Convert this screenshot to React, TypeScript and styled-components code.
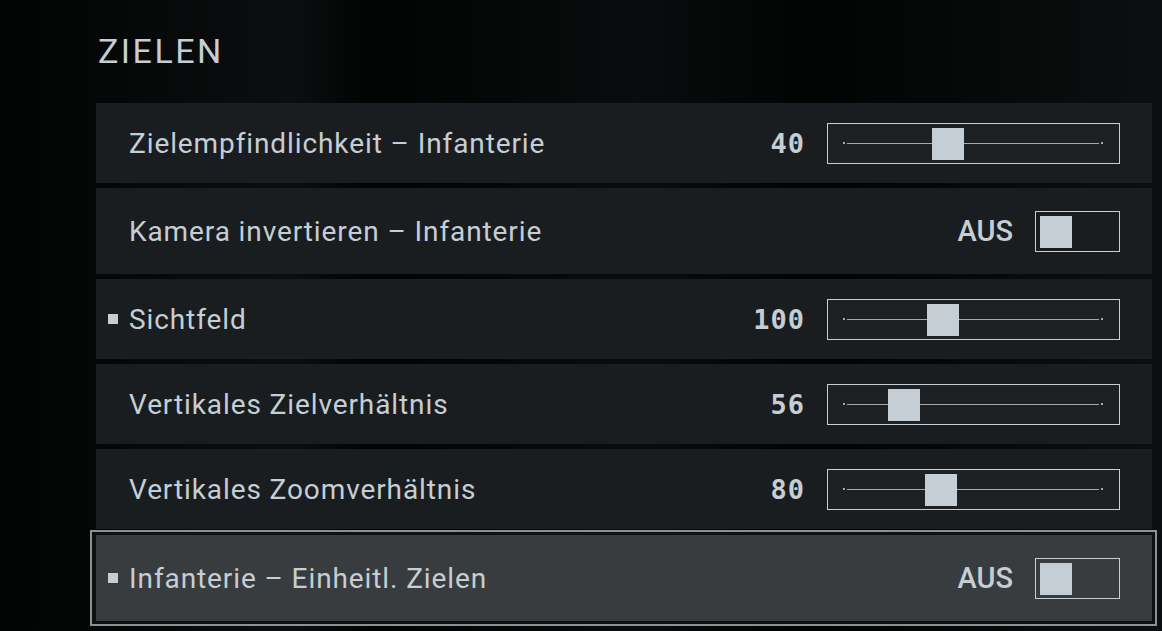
import React from "react";
import styled, { createGlobalStyle } from "styled-components";

const GlobalStyle = createGlobalStyle`
  html, body {
    margin: 0;
    padding: 0;
    background: #000;
  }
  body {
    font-family: "Roboto", "Liberation Sans", sans-serif;
    overflow: hidden;
  }
`;

const Screen = styled.div`
  width: 1162px;
  height: 631px;
  overflow: hidden;
  box-sizing: border-box;
  padding: 0 10px 0 96px;
  background:
    linear-gradient(90deg, rgba(20, 24, 26, 0) 0%, rgba(20, 24, 26, 0.5) 25%, rgba(0, 0, 0, 0) 32%, rgba(18, 22, 24, 0.45) 55%, rgba(0, 0, 0, 0) 70%, rgba(22, 26, 28, 0.5) 100%),
    #020303;
`;

const Title = styled.h1`
  margin: 0;
  padding: 34px 0 0 2px;
  height: 103px;
  box-sizing: border-box;
  font-family: "Roboto", "Liberation Sans", sans-serif;
  font-weight: 400;
  font-size: 34px;
  line-height: 34px;
  letter-spacing: 2.5px;
  color: #c5ced4;
`;

const List = styled.div`
  display: flex;
  flex-direction: column;
  gap: 5px;
`;

const Row = styled.div<{ $tall?: boolean; $active?: boolean }>`
  display: flex;
  align-items: center;
  height: ${(p) => (p.$tall ? 86 : 80)}px;
  box-sizing: border-box;
  padding: 0 32px 0 12px;
  background: ${(p) => (p.$active ? "#393c3f" : "#1a1d20")};
`;

const Selected = styled.div`
  margin: -4px -5px 0 -6px;
  border: 2px solid #8c9196;
  padding: 3px 3px 3px 4px;
  background: #0e1011;
`;

const Bullet = styled.span<{ $on?: boolean }>`
  width: 10px;
  height: 10px;
  margin-right: 11px;
  flex: none;
  background: ${(p) => (p.$on ? "#c5ced4" : "transparent")};
`;

const Label = styled.span`
  flex: 1;
  font-size: 28px;
  letter-spacing: 0.9px;
  color: #c5ced4;
  white-space: nowrap;
`;

const Value = styled.span`
  font-family: "DejaVu Sans Mono", "Liberation Mono", monospace;
  font-weight: 700;
  font-size: 27px;
  letter-spacing: 1px;
  color: #c5ced4;
  margin-right: 22px;
`;

const SliderBox = styled.div`
  position: relative;
  width: 293px;
  height: 41px;
  box-sizing: border-box;
  border: 1px solid #c5ced4;
  background: #1e2123;
  display: flex;
  align-items: center;
  padding: 0 20px 0 19px;
`;

const Track = styled.div`
  flex: 1;
  height: 1px;
  background: #a3a9ad;
  position: relative;
  &::before,
  &::after {
    content: "";
    position: absolute;
    top: -0.5px;
    width: 2px;
    height: 2px;
    background: #a3a9ad;
  }
  &::before {
    left: -4px;
  }
  &::after {
    right: -4px;
  }
`;

const Thumb = styled.div`
  position: absolute;
  top: 4px;
  width: 32px;
  height: 32px;
  background: #c5ced4;
`;

const ToggleText = styled.span`
  font-size: 29px;
  font-weight: 500;
  color: #c5ced4;
  margin-right: 22px;
`;

const ToggleBox = styled.div`
  width: 85px;
  height: 41px;
  box-sizing: border-box;
  border: 1px solid #c5ced4;
  padding: 4px;
`;

const Knob = styled.div`
  width: 32px;
  height: 32px;
  background: #c5ced4;
`;

type Item =
  | { kind: "slider"; label: string; value: string; thumb: number; bullet?: boolean }
  | { kind: "toggle"; label: string; value: string; bullet?: boolean };

const items: Item[] = [
  { kind: "slider", label: "Zielempfindlichkeit – Infanterie", value: "40", thumb: 104 },
  { kind: "toggle", label: "Kamera invertieren – Infanterie", value: "AUS" },
  { kind: "slider", label: "Sichtfeld", value: "100", thumb: 99, bullet: true },
  { kind: "slider", label: "Vertikales Zielverhältnis", value: "56", thumb: 60 },
  { kind: "slider", label: "Vertikales Zoomverhältnis", value: "80", thumb: 97 },
];

const Slider: React.FC<{ thumb: number }> = ({ thumb }) => (
  <SliderBox>
    <Track />
    <Thumb style={{ left: thumb }} />
  </SliderBox>
);

const Toggle: React.FC = () => (
  <ToggleBox>
    <Knob />
  </ToggleBox>
);

const SettingRow: React.FC<{ item: Item; active?: boolean }> = ({ item, active }) => (
  <Row $tall={item.kind === "toggle"} $active={active}>
    <Bullet $on={item.bullet} />
    <Label>{item.label}</Label>
    {item.kind === "slider" ? (
      <>
        <Value>{item.value}</Value>
        <Slider thumb={item.thumb} />
      </>
    ) : (
      <>
        <ToggleText>{item.value}</ToggleText>
        <Toggle />
      </>
    )}
  </Row>
);

const App: React.FC = () => {
  return (
    <Screen>
      <GlobalStyle />
      <Title>ZIELEN</Title>
      <List>
        {items.map((it) => (
          <SettingRow key={it.label} item={it} />
        ))}
        <Selected>
          <SettingRow
            active
            item={{ kind: "toggle", label: "Infanterie – Einheitl. Zielen", value: "AUS", bullet: true }}
          />
        </Selected>
      </List>
    </Screen>
  );
};

export default App;
